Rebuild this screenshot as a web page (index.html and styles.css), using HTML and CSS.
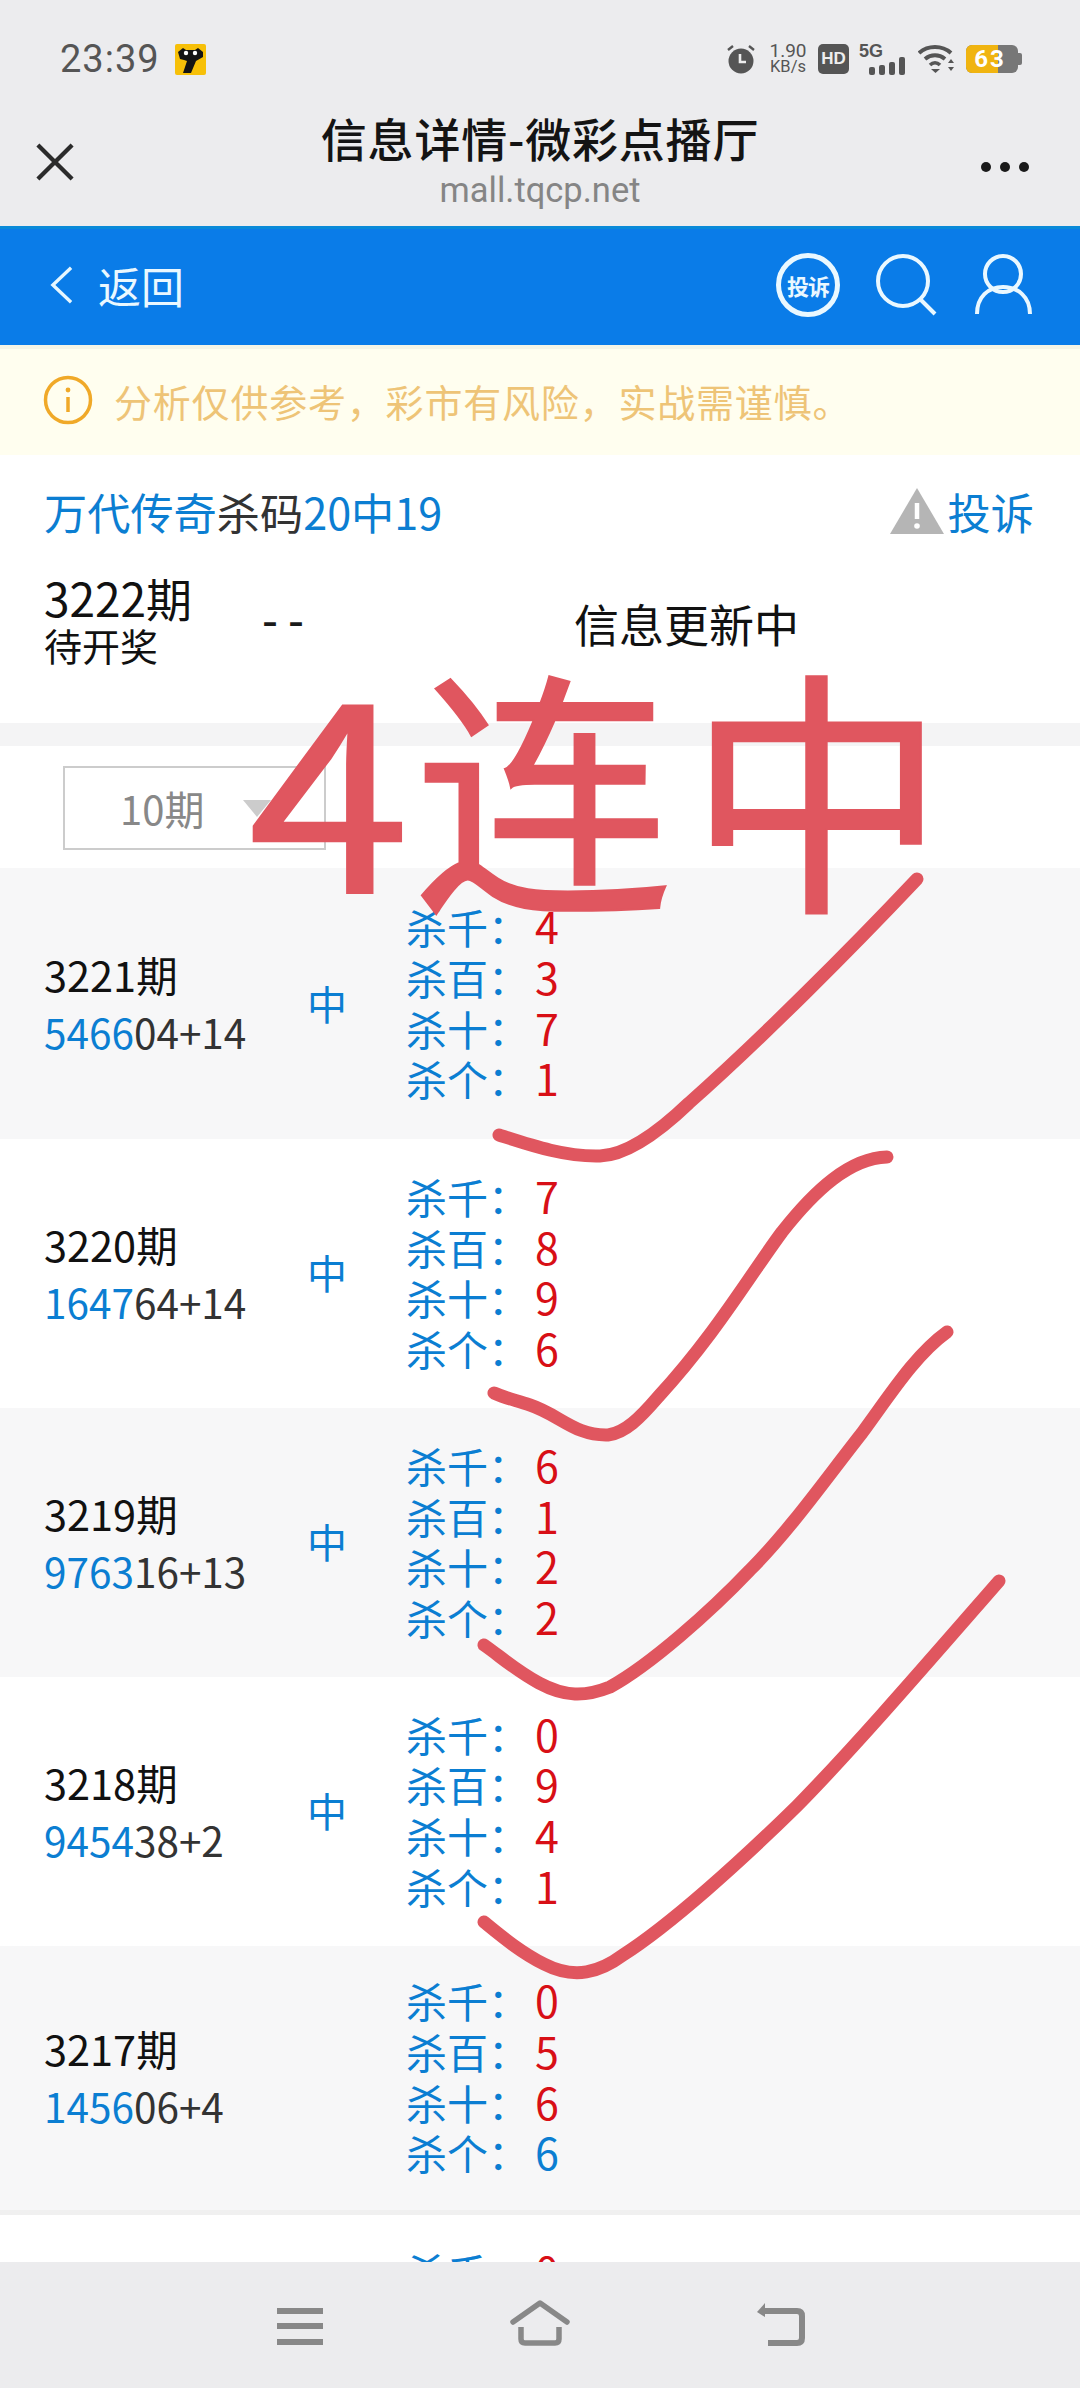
FILE: index.html
```html
<!DOCTYPE html>
<html lang="zh">
<head>
<meta charset="utf-8">
<title>信息详情-微彩点播厅</title>
<link rel="stylesheet" href="styles.css">
</head>
<body>
<div class="page">
  <header class="chrome">
    <div class="status">
      <span class="time">23:39</span>
      <svg class="appicon" viewBox="0 0 31 31"><rect width="31" height="31" rx="2" fill="#f7c008"/><path d="M3 8l5-4 3 2h9l3-2 5 4v5l-7 4-5 12H8l4-12-3-1-4-1z" fill="#141414"/><circle cx="11" cy="9" r="2.200" fill="#fff"/><circle cx="20" cy="9" r="2.200" fill="#fff"/></svg>
      <div class="status-right">
        <svg class="ic-alarm" viewBox="0 0 30 30"><path d="M2 6l5-4M28 6l-5-4" stroke="#555" stroke-width="2.400" fill="none"/><circle cx="15" cy="17" r="12.500" fill="#555"/><path d="M14 10v8h6" stroke="#eee" stroke-width="2.600" fill="none"/></svg>
        <div class="speed"><span>1.90</span><span class="speed-unit">KB/s</span></div>
        <span class="hd">HD</span>
        <div class="net"><span class="net-label">5G</span><svg viewBox="0 0 36 18" class="bars"><rect x="0" y="10" width="6" height="8" rx="2" fill="#555"/><rect x="10" y="8" width="6" height="10" rx="2" fill="#555"/><rect x="20" y="5" width="6" height="13" rx="2" fill="#555"/><rect x="30" y="0" width="6" height="18" rx="2" fill="#555"/></svg></div>
        <svg class="ic-wifi" viewBox="0 0 38 30"><path d="M1 9c9-8 23-8 32 0" stroke="#555" stroke-width="4" fill="none"/><path d="M7 15c6-5 14-5 20 0" stroke="#555" stroke-width="4" fill="none"/><path d="M12 21c3-3 7-3 10 0" stroke="#555" stroke-width="3.500" fill="none"/><path d="M13 25h9l-4.500 4z" fill="#555"/><path d="M33 15l3 4h-6zM33 27l3-4h-6z" fill="#555"/></svg>
        <div class="battery"><span class="battery-fill"></span><span class="battery-num">63</span><i class="battery-nub"></i></div>
      </div>
    </div>
    <div class="titlebar">
      <svg class="ic-close" viewBox="0 0 40 40"><path d="M2 2l36 36M38 2L2 38" stroke="#2b2b2b" stroke-width="4.500" fill="none"/></svg>
      <div class="titles">
        <div class="title">信息详情-微彩点播厅</div>
        <div class="url">mall.tqcp.net</div>
      </div>
      <div class="dots"><i></i><i></i><i></i></div>
    </div>
  </header>

  <nav class="bluebar">
    <svg class="ic-back" viewBox="0 0 24 40"><path d="M22 2L3 20l19 18" stroke="#e6f7ff" stroke-width="3.500" fill="none"/></svg>
    <span class="back-text">返回</span>
    <div class="blue-icons">
      <span class="complain-badge">投诉</span>
      <svg class="ic-search" viewBox="0 0 62 62"><circle cx="27" cy="27" r="25" stroke="#eaf8ff" stroke-width="4" fill="none"/><path d="M44 45l15 15" stroke="#eaf8ff" stroke-width="4" fill="none"/></svg>
      <svg class="ic-user" viewBox="0 0 60 62"><circle cx="29" cy="20" r="18" stroke="#eaf8ff" stroke-width="4" fill="none"/><path d="M3 60c0-17 11-27 26-27s27 10 27 27" stroke="#eaf8ff" stroke-width="4" fill="none"/></svg>
    </div>
  </nav>

  <div class="notice">
    <svg class="ic-info" viewBox="0 0 50 50"><circle cx="25" cy="25" r="22.500" stroke="#f0a928" stroke-width="3.500" fill="none"/><circle cx="25" cy="15" r="2.400" fill="#f0a928"/><path d="M25 22v15" stroke="#f0a928" stroke-width="3.500"/></svg>
    <span>分析仅供参考，彩市有风险，实战需谨慎。</span>
  </div>

  <main class="content">
    <section class="summary">
      <div class="summary-title">
        <div><span class="blue">万代传奇</span>杀码<span class="blue">20中19</span></div>
        <div class="complain">
          <svg class="ic-warn" viewBox="0 0 54 46"><path d="M27 0l27 46H0z" fill="#b5b5b5"/><path d="M27 15v16" stroke="#fff" stroke-width="4.500"/><circle cx="27" cy="38" r="2.800" fill="#fff"/></svg>
          <span class="blue">投诉</span>
        </div>
      </div>
      <div class="current">
        <div class="current-issue"><div class="issue-big">3222期</div><div class="pending">待开奖</div></div>
        <div class="current-dash">--</div>
        <div class="current-info">信息更新中</div>
      </div>
    </section>

    <div class="filter">
      <div class="select"><span>10期</span><i class="select-arrow"></i></div>
    </div>

    <div class="rows">
      <div class="row alt first">
        <div><div class="issue">3221期</div><div class="code"><span class="blue">5466</span>04+14</div></div>
        <div class="hit">中</div>
        <div class="kills">
          <div>杀千：<b class="miss">4</b></div><div>杀百：<b class="miss">3</b></div><div>杀十：<b class="miss">7</b></div><div>杀个：<b class="miss">1</b></div>
        </div>
      </div>
      <div class="row">
        <div><div class="issue">3220期</div><div class="code"><span class="blue">1647</span>64+14</div></div>
        <div class="hit">中</div>
        <div class="kills">
          <div>杀千：<b class="miss">7</b></div><div>杀百：<b class="miss">8</b></div><div>杀十：<b class="miss">9</b></div><div>杀个：<b class="miss">6</b></div>
        </div>
      </div>
      <div class="row alt">
        <div><div class="issue">3219期</div><div class="code"><span class="blue">9763</span>16+13</div></div>
        <div class="hit">中</div>
        <div class="kills">
          <div>杀千：<b class="miss">6</b></div><div>杀百：<b class="miss">1</b></div><div>杀十：<b class="miss">2</b></div><div>杀个：<b class="miss">2</b></div>
        </div>
      </div>
      <div class="row">
        <div><div class="issue">3218期</div><div class="code"><span class="blue">9454</span>38+2</div></div>
        <div class="hit">中</div>
        <div class="kills">
          <div>杀千：<b class="miss">0</b></div><div>杀百：<b class="miss">9</b></div><div>杀十：<b class="miss">4</b></div><div>杀个：<b class="miss">1</b></div>
        </div>
      </div>
      <div class="row alt last-alt">
        <div><div class="issue">3217期</div><div class="code"><span class="blue">1456</span>06+4</div></div>
        <div class="hit"></div>
        <div class="kills">
          <div>杀千：<b class="miss">0</b></div><div>杀百：<b class="miss">5</b></div><div>杀十：<b class="miss">6</b></div><div>杀个：<b>6</b></div>
        </div>
      </div>
      <div class="row">
        <div></div>
        <div></div>
        <div class="kills">
          <div>杀千：<b class="miss">0</b></div><div>杀百：<b class="miss">0</b></div><div>杀十：<b class="miss">0</b></div><div>杀个：<b class="miss">0</b></div>
        </div>
      </div>
    </div>
  </main>

  <footer class="navbar">
    <svg class="ic-menu" viewBox="0 0 46 40"><path d="M0 3h46M0 18h46M0 34h46" stroke="#888" stroke-width="6" fill="none"/></svg>
    <svg class="ic-home" viewBox="0 0 60 46"><path d="M3 22L30 3l27 19" stroke="#888" stroke-width="5.500" fill="none" stroke-linejoin="round" stroke-linecap="round"/><path d="M11 27v12q0 4 4 4h30q4 0 4-4V27" stroke="#888" stroke-width="5.500" fill="none"/></svg>
    <svg class="ic-return" viewBox="0 0 50 44"><path d="M10 9h32q5 0 5 5v22q0 5-5 5H13" stroke="#888" stroke-width="6" fill="none"/><path d="M2 10l8-9v14z" fill="#888"/></svg>
  </footer>

  <div class="mark-text"><span class="mark-four">4</span><span class="mark-lian">连</span><span class="mark-zhong">中</span></div>
  <svg class="mark-lines" viewBox="0 0 1080 2388">
    <g fill="none" stroke="#e0565f" stroke-width="13" stroke-linecap="round" stroke-linejoin="round">
      <path d="M917 879C850 950 760 1040 689 1103C665 1126 630 1155 600 1156C565 1157 530 1145 499 1135"/>
      <path d="M887 1157C850 1158 815 1190 782 1232C750 1275 715 1335 658 1397C640 1418 625 1433 608 1435C575 1436 560 1415 530 1405C515 1400 505 1398 494 1393"/>
      <path d="M947 1332C915 1355 890 1395 862 1433C825 1480 790 1530 750 1570C710 1612 650 1665 610 1687C585 1697 565 1697 539 1683C515 1670 500 1656 484 1645"/>
      <path d="M999 1581C930 1660 855 1747 797 1806C740 1862 670 1925 623 1955C600 1972 575 1980 544 1964C520 1952 500 1935 484 1922"/>
    </g>
  </svg>
</div>
</body>
</html>
```

FILE: styles.css
```css
* { box-sizing: border-box; }
html, body { margin: 0; padding: 0; }
body { font-family: "Noto Sans CJK SC", "Noto Sans", sans-serif; background: #fff; color: #1a1a1a; }

.page { position: relative; width: 1080px; height: 2388px; overflow: hidden; display: flex; flex-direction: column; }

.chrome { background: #ececee; height: 226px; flex: none; }
.status { height: 118px; display: flex; align-items: center; padding: 0 60px 0 60px; }
.time { font-family: Roboto, sans-serif; font-size: 38px; color: #555; letter-spacing: 1px; }
.appicon { width: 31px; height: 31px; margin-left: 15px; }
.status-right { margin-left: auto; margin-right: 2px; display: flex; align-items: center; }
.ic-alarm { width: 30px; height: 30px; }
.speed { display: flex; flex-direction: column; align-items: center; width: 36px; margin-left: 14px; font-family: Roboto, sans-serif; font-size: 19px; line-height: 16px; color: #555; }
.speed-unit { font-size: 16.500px; }
.hd { margin-left: 12px; width: 31px; height: 30px; border-radius: 5px; background: #555; color: #eee; font: bold 17px/30px "Liberation Sans", sans-serif; text-align: center; }
.net { margin-left: 10px; width: 46px; height: 32px; position: relative; }
.net-label { position: absolute; left: 0; top: -3px; font: bold 18px/22px "Liberation Sans", sans-serif; color: #555; }
.bars { position: absolute; right: 0; bottom: 0; width: 36px; height: 18px; }
.ic-wifi { width: 38px; height: 30px; margin-left: 13px; }
.battery { position: relative; margin-left: 10px; width: 52px; height: 28px; border-radius: 6px; background: #777; }
.battery-fill { position: absolute; left: 0; top: 0; bottom: 0; width: 32px; background: #f0b410; border-radius: 6px 0 0 6px; }
.battery-num { position: absolute; left: 0; right: 4px; top: 0; text-align: center; font: bold 24px/28px Roboto, sans-serif; color: #fff; letter-spacing: 2px; }
.battery-nub { position: absolute; right: -4px; top: 8px; width: 4px; height: 12px; background: #777; border-radius: 0 2px 2px 0; }

.titlebar { height: 108px; position: relative; display: flex; justify-content: center; }
.ic-close { position: absolute; left: 36px; top: 25px; width: 38px; height: 38px; }
.titles { text-align: center; }
.title { font-size: 46px; line-height: 58px; font-weight: 500; color: #141414; margin-top: -10px; letter-spacing: 0.8px; }
.url { font-family: Roboto, sans-serif; font-size: 34.500px; line-height: 40px; color: #858585; margin-top: 4px; }
.dots { position: absolute; left: 981px; top: 44px; display: flex; gap: 9px; }
.dots i { width: 10px; height: 10px; border-radius: 50%; background: #1a1a1a; }

.bluebar { flex: none; height: 119px; background: #0a7ce8; border-top: 3px solid #0a8ad8; display: flex; align-items: center; padding: 0 46px 4px 50px; color: #eaf8ff; }
.ic-back { width: 23px; height: 40px; }
.back-text { font-size: 43px; margin-left: 25px; line-height: 60px; }
.blue-icons { margin-left: auto; display: flex; align-items: center; }
.complain-badge { width: 64px; height: 64px; border: 5px solid #eaf8ff; border-radius: 50%; font-size: 22px; line-height: 54px; font-weight: 700; text-align: center; letter-spacing: -1px; white-space: nowrap; }
.ic-search { width: 62px; height: 62px; margin-left: 36px; }
.ic-user { width: 60px; height: 62px; margin-left: 36px; }

.notice { flex: none; height: 110px; background: #fffeef; border-top: 4px solid #f5f5e6; display: flex; align-items: center; padding: 0 0 4px 43px; color: #eec477; font-size: 38px; }
.ic-info { width: 50px; height: 50px; flex: none; }
.notice span { margin-left: 21px; letter-spacing: 0.8px; }

.content { flex: 1; min-height: 0; overflow: hidden; background: #fff; }
.blue { color: #0b7ed2; }

.summary { height: 268px; padding: 0 46px 0 44px; }
.summary-title { display: flex; justify-content: space-between; align-items: center; height: 112px; font-size: 43.200px; color: #333; }
.complain { display: flex; align-items: center; gap: 4px; }
.ic-warn { width: 54px; height: 46px; }
.current { display: grid; grid-template-columns: 218px 312px 1fr; align-items: center; margin-top: 4px; }
.issue-big { font-size: 46px; line-height: 52px; color: #111; }
.issue { font-size: 41.500px; line-height: 52px; color: #111; }
.pending { font-size: 38px; line-height: 44px; color: #111; }
.current-dash { font-family: "Liberation Sans", sans-serif; font-size: 48px; letter-spacing: 10px; line-height: 44px; padding-top: 4px; }
.current-info { font-size: 45px; color: #111; padding-top: 8px; }

.filter { height: 145px; border-top: 23px solid #f4f4f5; padding: 20px 0 0 63px; }
.select { width: 263px; height: 84px; border: 2px solid #ccc; display: flex; align-items: center; padding-left: 55px; color: #888; font-size: 40px; }
.select-arrow { margin-left: 39px; border-left: 14px solid transparent; border-right: 14px solid transparent; border-top: 17px solid #ccc; }

.row { display: grid; grid-template-columns: 263px 99px 1fr; align-items: center; padding-left: 44px; height: 268.900px; }
.first { height: 271px; }
.alt { background: #f7f7f8; }
.last-alt { border-bottom: 5px solid #f0f0f0; }
.issue { position: relative; top: -3px; }
.hit, .kills { position: relative; top: -1px; }
.code { font-size: 40.500px; line-height: 48px; margin-top: 5px; color: #333; }
.hit { font-size: 40px; color: #0b7ed2; line-height: 50px; }
.kills { font-size: 41px; line-height: 50.800px; color: #0b7ed2; }
.kills b { font-weight: 400; margin-left: 6px; font-size: 43px; line-height: 1; }
.kills b.miss { color: #d80f16; }

.navbar { flex: none; height: 126px; background: #ececee; position: relative; z-index: 2; }
.ic-menu { position: absolute; left: 277px; top: 46px; width: 46px; height: 40px; }
.ic-home { position: absolute; left: 510px; top: 38px; width: 60px; height: 46px; }
.ic-return { position: absolute; left: 755px; top: 40px; width: 50px; height: 44px; }

.mark-text { position: absolute; left: 248px; top: 611px; display: flex; align-items: baseline; line-height: 340px; color: #e0565f; white-space: nowrap; -webkit-text-stroke: 2px #e0565f; }
.mark-four { font-size: 256px; transform: scaleX(1.14); transform-origin: left center; }
.mark-lian { font-size: 258px; margin-left: 24px; }
.mark-zhong { font-size: 258px; margin-left: 16px; }
.mark-lines { position: absolute; left: 0; top: 0; width: 1080px; height: 2388px; pointer-events: none; }
```
